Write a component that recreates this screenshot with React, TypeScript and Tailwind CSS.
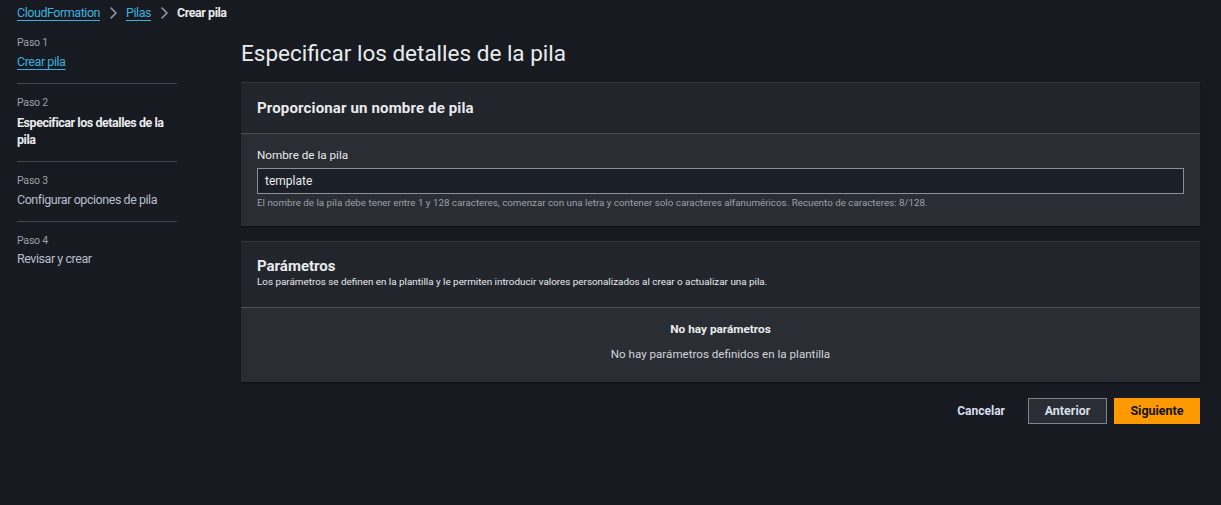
import React from "react";

const font = { fontFamily: 'Roboto, "Noto Sans", Arial, sans-serif' };

function Chevron() {
  return (
    <svg width="16" height="16" viewBox="0 0 16 16" className="mx-[5px]" fill="none">
      <path d="M6 3l5 5-5 5" stroke="#8d99a8" strokeWidth="1.6" strokeLinecap="round" strokeLinejoin="round" />
    </svg>
  );
}

export default function App() {
  return (
    <div style={font} className="w-[1221px] h-[505px] bg-[#171a21] text-[#d1d5db] overflow-hidden">
      {/* Breadcrumb */}
      <div className="flex items-center h-[25px] pl-[17px] pt-[1px] text-[12.5px] tracking-[-0.45px]">
        <a className="text-[#3fb0dd] underline underline-offset-[3px]">CloudFormation</a>
        <Chevron />
        <a className="text-[#3fb0dd] underline underline-offset-[3px]">Pilas</a>
        <Chevron />
        <span className="font-bold text-[#e9ebed]">Crear pila</span>
      </div>

      <div className="flex">
        {/* Sidebar */}
        <div className="w-[160px] ml-[17px] shrink-0 pt-[10px]">
          <div className="pb-[12px] border-b border-[#414750]">
            <div className="text-[10.5px] tracking-[-0.2px] text-[#9ba1a9] leading-[16px]">Paso 1</div>
            <a className="block mt-[2px] text-[12.5px] tracking-[-0.45px] leading-[18px] text-[#3fb0dd] underline underline-offset-[3px]">Crear pila</a>
          </div>
          <div className="pt-[11px] pb-[13px] border-b border-[#414750]">
            <div className="text-[10.5px] tracking-[-0.2px] text-[#9ba1a9] leading-[16px]">Paso 2</div>
            <div className="mt-[3px] text-[12.5px] tracking-[-0.45px] leading-[17px] font-bold text-[#e9ebed]">Especificar los detalles de la pila</div>
          </div>
          <div className="pt-[11px] pb-[12px] border-b border-[#414750]">
            <div className="text-[10.5px] tracking-[-0.2px] text-[#9ba1a9] leading-[16px]">Paso 3</div>
            <div className="mt-[2px] text-[12.5px] tracking-[-0.45px] leading-[18px] text-[#b6bec9]">Configurar opciones de pila</div>
          </div>
          <div className="pt-[11px]">
            <div className="text-[10.5px] tracking-[-0.2px] text-[#9ba1a9] leading-[16px]">Paso 4</div>
            <div className="mt-[1px] text-[12.5px] tracking-[-0.45px] leading-[18px] text-[#b6bec9]">Revisar y crear</div>
          </div>
        </div>

        {/* Main */}
        <div className="ml-[64px] w-[959px] shrink-0">
          <h1 className="text-[22.5px] leading-[32px] text-[#e9ebed] mt-[12px] mb-[13px]">Especificar los detalles de la pila</h1>

          <div className="bg-[#2a2d33] border-t border-[#33363c] shadow-[0_1px_1px_#0c0e12]">
            <div className="bg-[#22252c] h-[51px] flex items-center px-[16px] border-b border-[#4a4e56]">
              <h2 className="text-[15px] tracking-[0.15px] font-bold text-[#e9ebed]">Proporcionar un nombre de pila</h2>
            </div>
            <div className="px-[16px] pt-[13px] pb-[16px]">
              <div className="text-[11.7px] leading-[16px] text-[#e9ebed]">Nombre de la pila</div>
              <div className="mt-[5px] h-[26px] bg-[#1b1f27] border border-[#8a9099] flex items-center px-[7px] text-[12px] text-[#e9ebed]">template</div>
              <div className="mt-[2px] text-[9.8px] leading-[14px] text-[#9ba1a9]">
                El nombre de la pila debe tener entre 1 y 128 caracteres, comenzar con una letra y contener solo caracteres alfanuméricos. Recuento de caracteres: 8/128.
              </div>
            </div>
          </div>

          <div className="mt-[15px] bg-[#2a2d33] border-t border-[#33363c] shadow-[0_1px_1px_#0c0e12]">
            <div className="bg-[#22252c] h-[66px] flex flex-col justify-center pb-[3px] px-[16px] border-b border-[#4a4e56]">
              <h2 className="text-[15px] leading-[18px] font-bold text-[#e9ebed]">Parámetros</h2>
              <div className="text-[9.85px] leading-[14px] text-[#e9ebed]">
                Los parámetros se definen en la plantilla y le permiten introducir valores personalizados al crear o actualizar una pila.
              </div>
            </div>
            <div className="h-[74px] flex flex-col items-center pt-[13px]">
              <div className="text-[11.8px] leading-[16px] font-bold text-[#e9ebed]">No hay parámetros</div>
              <div className="mt-[9px] text-[11.6px] leading-[16px] text-[#d1d5db]">No hay parámetros definidos en la plantilla</div>
            </div>
          </div>

          <div className="flex justify-end items-center mt-[16px] gap-[7px]">
            <button className="px-[16px] h-[26px] text-[12px] font-bold text-[#d5dfea]">Cancelar</button>
            <button className="w-[79px] h-[26px] border border-[#7d848d] bg-[#2a2d33] text-[12.5px] font-bold text-[#d5dfea]">Anterior</button>
            <button className="w-[86px] h-[26px] bg-[#ff9900] text-[12.5px] font-bold text-[#0f141a]">Siguiente</button>
          </div>
        </div>
      </div>
    </div>
  );
}
